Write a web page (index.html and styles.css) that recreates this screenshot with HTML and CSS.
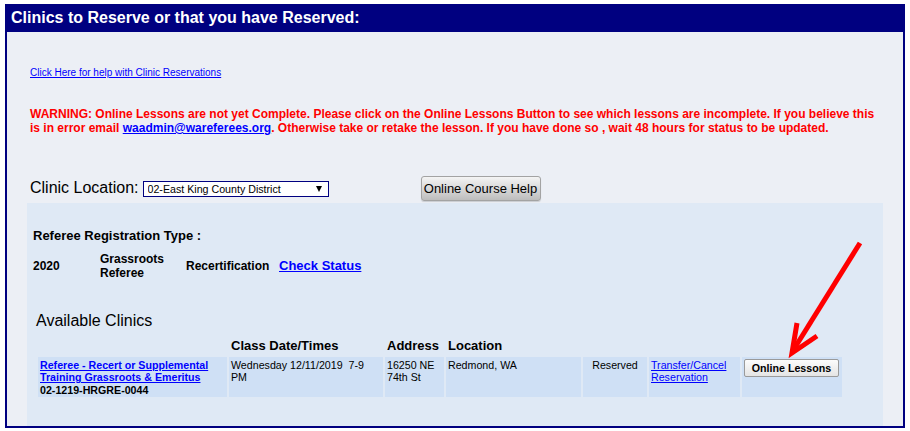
FILE: index.html
```html
<!DOCTYPE html>
<html lang="en">
<head>
    <meta charset="UTF-8">
    <title>Clinic Reservations</title>
    <link rel="stylesheet" href="styles.css">
</head>
<body>
    <div class="frame">
        <div class="title">Clinics to Reserve or that you have Reserved:</div>
        <div class="content">
            <div class="help-line"><a href="#">Click Here for help with Clinic Reservations</a></div>

            <p class="warning">WARNING: Online Lessons are not yet Complete. Please click on the Online Lessons Button to see which lessons are incomplete. If you believe this is in error email <a href="#">waadmin@wareferees.org</a>. Otherwise take or retake the lesson. If you have done so , wait 48 hours for status to be updated.</p>

            <div class="location-row">
                <label class="location-label" for="location">Clinic Location:</label>
                <span class="select-wrap">
                    <select id="location" class="location-select">
                        <option>02-East King County District</option>
                    </select>
                    <span class="caret"></span>
                </span>
                <button class="course-help">Online Course Help</button>
            </div>

            <div class="panel">
                <div class="reg-title">Referee Registration Type :</div>
                <div class="reg-row">
                    <span class="reg-year">2020</span>
                    <span class="reg-grade">Grassroots Referee</span>
                    <span class="reg-kind">Recertification</span>
                    <a class="check-status" href="#">Check Status</a>
                </div>

                <div class="avail-title">Available Clinics</div>
                <table class="clinics">
                    <tr>
                        <th class="c-name"></th>
                        <th class="c-date">Class Date/Times</th>
                        <th class="c-addr">Address</th>
                        <th class="c-loc">Location</th>
                        <th class="c-status"></th>
                        <th class="c-action"></th>
                        <th class="c-lessons"></th>
                    </tr>
                    <tr>
                        <td><a class="clinic-link" href="#">Referee - Recert or Supplemental Training Grassroots &amp; Emeritus</a><br><b>02-1219-HRGRE-0044</b></td>
                        <td>Wednesday 12/11/2019 &nbsp;7-9 PM</td>
                        <td>16250 NE 74th St</td>
                        <td>Redmond, WA</td>
                        <td class="status">Reserved</td>
                        <td><a href="#">Transfer/Cancel Reservation</a></td>
                        <td><button class="lessons">Online Lessons</button></td>
                    </tr>
                </table>
            </div>
        </div>
    </div>

    <svg class="arrow" width="910" height="431" viewBox="0 0 910 431">
        <line x1="860" y1="243" x2="794" y2="349" stroke="#ff0000" stroke-width="5"/>
        <polyline points="797,323 792,353 817,336" fill="none" stroke="#ff0000" stroke-width="5" stroke-linejoin="miter"/>
    </svg>
</body>
</html>
```

FILE: styles.css
```css
body { margin: 0; font-family: "Liberation Sans", Arial, sans-serif; background: #ffffff; color: #000; }
a { color: #0000ff; }

.frame { margin: 4px 0 0 5px; width: 896px; border: 2px solid #000080; background: #eceff5; }
.title { background: #000080; color: #ffffff; font-weight: bold; font-size: 16px; line-height: 18px; padding: 3px 4px 5px; }

.content { padding: 0 20px; }
.help-line { padding: 35px 3px 0; font-size: 10px; line-height: 12px; }

.warning { margin: 28px 0 0; padding: 0 3px; color: #ff0000; font-weight: bold; font-size: 12px; line-height: 14px; }
.warning a { color: #0000ff; }

.location-row { margin-top: 41px; height: 25px; padding-left: 3px; display: flex; align-items: center; }
.location-label { font-size: 16px; line-height: 18px; margin-bottom: 2px; }
.select-wrap { position: relative; margin-left: 4px; display: inline-flex; }
.location-select { appearance: none; -webkit-appearance: none; width: 186px; height: 16px; border: 1px solid #000080; border-radius: 0; background: #fff; font-family: "Liberation Sans", Arial, sans-serif; font-size: 8pt; padding: 0 0 0 4px; margin: 0; color: #000; }
.caret { position: absolute; right: 7px; top: 5px; width: 0; height: 0; border-left: 3px solid transparent; border-right: 3px solid transparent; border-top: 6px solid #000; }
.course-help { margin-left: 92px; width: 120px; height: 25px; padding: 0; font-family: "Liberation Sans", Arial, sans-serif; font-size: 13px; color: #000; border: 1px solid #a3a3a3; border-radius: 3px; background: linear-gradient(#f4f4f4, #bdbdbd); box-shadow: 0 1px 1px rgba(0, 0, 0, 0.15); }

.panel { margin-top: 2px; background: #dfe9f5; padding: 25px 0 27px 6px; }
.reg-title { font-weight: bold; font-size: 13px; line-height: 15px; }
.reg-row { margin-top: 9px; display: flex; align-items: center; font-weight: bold; font-size: 12px; line-height: 14px; }
.reg-year { width: 67px; }
.reg-grade { width: 86px; padding-right: 10px; box-sizing: border-box; }
.reg-kind { width: 93px; }
.check-status { font-size: 13px; font-weight: bold; }

.avail-title { margin: 32px 0 0 3px; font-size: 16px; line-height: 18px; }

.clinics { margin: 3px 0 0 3px; width: 808px; table-layout: fixed; border-collapse: separate; border-spacing: 2px; }
.clinics th { padding: 3px 2px 2px; font-size: 13px; line-height: 15px; font-weight: bold; text-align: left; vertical-align: bottom; }
.clinics td { padding: 2px 2px 1px; background: #cfe0f5; font-size: 8pt; line-height: 12.3px; vertical-align: top; }
.c-name { width: 185px; }
.c-date { width: 150px; }
.c-addr { width: 55px; }
.c-loc { width: 131px; }
.c-status { width: 60px; }
.c-action { width: 87px; }
.c-lessons { width: 96px; }
.clinic-link { font-weight: bold; }
.status { text-align: center; }
.lessons { width: 95px; height: 18px; padding: 0; font-family: "Liberation Sans", Arial, sans-serif; font-weight: bold; font-size: 8pt; color: #000; border: 1px solid #9a9a9a; border-radius: 2px; background: linear-gradient(#fcfcfc, #e4e4e4); }

.arrow { position: absolute; top: 0; left: 0; pointer-events: none; }
```
